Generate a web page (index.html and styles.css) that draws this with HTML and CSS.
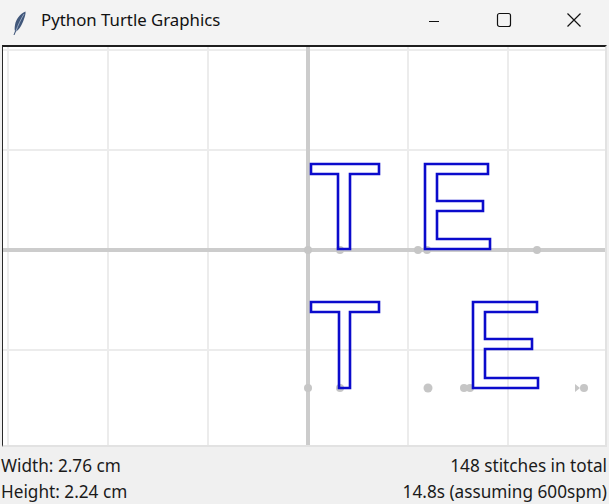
FILE: index.html
```html
<!DOCTYPE html>
<html>
<head>
<meta charset="utf-8">
<link rel="stylesheet" href="styles.css">
</head>
<body>
<div class="window">
  <div class="titlebar">
    <svg class="feather" width="16" height="26" viewBox="0 0 16 26">
      <path d="M14.5 1.5 C9 4 5 9 4 15 C3.5 18 3.5 20 4 21 L2.5 25 L3.5 25 L5 21.5 C8 20 11 15 13 9 C14 6 14.8 4 14.5 1.5 Z" fill="#41577a"/>
      <path d="M13 4 C10 9 7 15 5 21" stroke="#a9b9cf" stroke-width="0.8" fill="none"/>
    </svg>
    <span class="title">Python Turtle Graphics</span>
    <div class="controls">
      <div class="ctl"><svg width="12" height="12" viewBox="0 0 12 12"><path d="M1 6.5 H11" stroke="#111" stroke-width="1"/></svg></div>
      <div class="ctl"><svg width="16" height="16" viewBox="0 0 16 16"><rect x="1.5" y="1.5" width="13" height="13" rx="2" fill="none" stroke="#111" stroke-width="1.2"/></svg></div>
      <div class="ctl"><svg width="16" height="16" viewBox="0 0 16 16"><path d="M1.5 1.5 L14.5 14.5 M14.5 1.5 L1.5 14.5" stroke="#111" stroke-width="1.2"/></svg></div>
    </div>
  </div>
  <div class="canvas">
    <svg class="drawing" width="602" height="398" viewBox="3 47 602 398">
      <g stroke="#ececec" stroke-width="2">
        <line x1="8" y1="47" x2="8" y2="445"/>
        <line x1="108" y1="47" x2="108" y2="445"/>
        <line x1="208" y1="47" x2="208" y2="445"/>
        <line x1="408" y1="47" x2="408" y2="445"/>
        <line x1="508" y1="47" x2="508" y2="445"/>
        <line x1="3" y1="50" x2="605" y2="50"/>
        <line x1="3" y1="150" x2="605" y2="150"/>
        <line x1="3" y1="350" x2="605" y2="350"/>
      </g>
      <g stroke="#cccccc" stroke-width="4">
        <line x1="308" y1="47" x2="308" y2="445"/>
        <line x1="3" y1="250" x2="605" y2="250"/>
      </g>
      <g fill="#c6c6c6">
        <circle cx="308" cy="250" r="4"/>
        <circle cx="340" cy="250" r="4"/>
        <circle cx="418" cy="250" r="4"/>
        <circle cx="427" cy="250" r="4"/>
        <circle cx="537" cy="250" r="4"/>
        <circle cx="308" cy="388" r="4"/>
        <circle cx="340" cy="388" r="4"/>
        <circle cx="428" cy="388" r="4.5"/>
        <circle cx="464" cy="388" r="4"/>
        <circle cx="470" cy="388" r="4"/>
        <circle cx="584" cy="388" r="4"/>
        <path d="M575 384 L580 388 L575 392 Z"/>
      </g>
      <g fill="none" stroke="#0b0bcc" stroke-width="2.6" stroke-linejoin="miter">
        <path d="M311 164 H379 V174 H350 V249 H338 V174 H311 Z"/>
        <path d="M425 164 H488 V174 H437 V201 H483 V211 H437 V239 H490 V249 H425 Z"/>
        <path d="M311 302 H379 V312 H350 V388 H339 V312 H311 Z"/>
        <path d="M473 302 H537 V312 H485 V339 H532 V349 H485 V378 H538 V388 H473 Z"/>
      </g>
    </svg>
  </div>
  <div class="status">
    <div class="row"><span>Width: 2.76 cm</span><span>148 stitches in total</span></div>
    <div class="row"><span>Height: 2.24 cm</span><span>14.8s (assuming 600spm)</span></div>
  </div>
</div>
</body>
</html>
```
FILE: styles.css
```css
html, body {
  margin: 0;
  padding: 0;
  background: #f0f0f0;
}
.window {
  width: 609px;
  height: 504px;
  display: flex;
  flex-direction: column;
  overflow: hidden;
  font-family: "Noto Sans", "Open Sans", sans-serif;
  color: #1a1a1a;
}
.titlebar {
  height: 45px;
  background: #f3f3f3;
  display: flex;
  align-items: center;
  flex-shrink: 0;
}
.feather {
  margin-left: 11px;
  margin-right: 14px;
}
.title {
  font-size: 16.8px;
  color: #111;
  margin-top: -6px;
}
.controls {
  margin-left: auto;
  display: flex;
  align-self: stretch;
}
.ctl {
  width: 70px;
  display: flex;
  align-items: center;
  justify-content: center;
  padding-bottom: 6px;
}
.ctl:first-child {
  padding-bottom: 4px;
}
.canvas {
  margin: 0 2px;
  border-top: 2px solid #1e1e1e;
  border-left: 1px solid #2a2a2a;
  border-right: 2px solid #e2e2e2;
  border-bottom: 2px solid #e2e2e2;
  background: #ffffff;
  height: 398px;
  flex-shrink: 0;
}
.drawing {
  display: block;
}
.status {
  flex: 1;
  display: flex;
  flex-direction: column;
  padding: 6px 2px 0 1px;
  font-size: 17.2px;
}
.row {
  display: flex;
  justify-content: space-between;
  height: 26px;
  line-height: 26px;
}
```
